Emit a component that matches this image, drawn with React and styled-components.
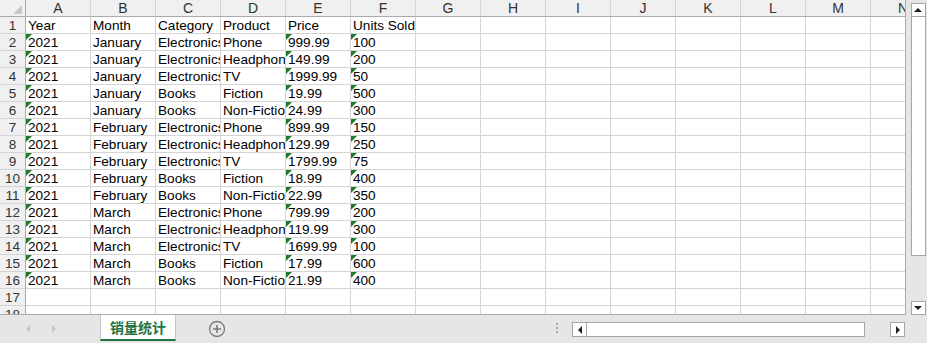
import React from 'react'
import styled, { createGlobalStyle } from 'styled-components'

const GlobalStyle = createGlobalStyle`
  html, body { margin: 0; padding: 0; background: #fff; }
  body { font-family: "Liberation Sans", Arial, sans-serif; }
`;

const columns = ['A', 'B', 'C', 'D', 'E', 'F', 'G', 'H', 'I', 'J', 'K', 'L', 'M', 'N']

const header = ['Year', 'Month', 'Category', 'Product', 'Price', 'Units Sold']

const sales = [
  ['2021', 'January', 'Electronics', 'Phone', '999.99', '100'],
  ['2021', 'January', 'Electronics', 'Headphones', '149.99', '200'],
  ['2021', 'January', 'Electronics', 'TV', '1999.99', '50'],
  ['2021', 'January', 'Books', 'Fiction', '19.99', '500'],
  ['2021', 'January', 'Books', 'Non-Fiction', '24.99', '300'],
  ['2021', 'February', 'Electronics', 'Phone', '899.99', '150'],
  ['2021', 'February', 'Electronics', 'Headphones', '129.99', '250'],
  ['2021', 'February', 'Electronics', 'TV', '1799.99', '75'],
  ['2021', 'February', 'Books', 'Fiction', '18.99', '400'],
  ['2021', 'February', 'Books', 'Non-Fiction', '22.99', '350'],
  ['2021', 'March', 'Electronics', 'Phone', '799.99', '200'],
  ['2021', 'March', 'Electronics', 'Headphones', '119.99', '300'],
  ['2021', 'March', 'Electronics', 'TV', '1699.99', '100'],
  ['2021', 'March', 'Books', 'Fiction', '17.99', '600'],
  ['2021', 'March', 'Books', 'Non-Fiction', '21.99', '400'],
]

// columns stored as text get the green marker
const textNumberCols = [0, 4, 5]

function App() {
  const rows = [header, ...sales, [], []]

  return (
    <>
      <GlobalStyle />
      <Workbook>
        <SheetArea>
          <Grid>
            <HeaderRow>
              <Corner />
              {columns.map((c) => (
                <ColHead key={c}>{c}</ColHead>
              ))}
            </HeaderRow>
            {rows.map((row, r) => (
              <Row key={r}>
                <RowHead>{r + 1}</RowHead>
                {columns.map((c, i) => (
                  <Cell key={c} $flag={r > 0 && row[i] !== undefined && textNumberCols.includes(i)}>
                    {row[i]}
                  </Cell>
                ))}
              </Row>
            ))}
          </Grid>
          <VScroll>
            <ScrollBtn><ArrowUp /></ScrollBtn>
            <VThumb />
            <VTrack />
            <ScrollBtn><ArrowDown /></ScrollBtn>
          </VScroll>
        </SheetArea>
        <TabBar>
          <NavArrows>
            <NavArrow $dir="left" />
            <NavArrow $dir="right" />
          </NavArrows>
          <SheetTab>销量统计</SheetTab>
          <AddSheet>
            <svg width="18" height="18" viewBox="0 0 18 18">
              <circle cx="9" cy="9" r="7.5" fill="none" stroke="#7a7a7a" strokeWidth="1.3" />
              <path d="M9 5v8M5 9h8" stroke="#7a7a7a" strokeWidth="1.6" />
            </svg>
          </AddSheet>
          <Spacer />
          <Grip>
            <span /><span /><span />
          </Grip>
          <HScroll>
            <ScrollBtn><ArrowLeft /></ScrollBtn>
            <HThumb />
            <HTrack />
            <ScrollBtn><ArrowRight /></ScrollBtn>
          </HScroll>
        </TabBar>
      </Workbook>
    </>
  )
}

const Workbook = styled.div`
  width: 927px;
  height: 343px;
  display: flex;
  flex-direction: column;
  overflow: hidden;
  background: #e6e6e6;
`;

const SheetArea = styled.div`
  height: 315px;
  display: flex;
  flex-shrink: 0;
`;

const Grid = styled.div`
  width: 906px;
  height: 315px;
  overflow: hidden;
  background: #fff;
  border-right: 1px solid #ababab;
  border-bottom: 1px solid #ababab;
  box-sizing: border-box;
`;

const HeaderRow = styled.div`
  display: flex;
  height: 17px;
  background: #f0f0f0;
  border-bottom: 1px solid #ababab;
  box-sizing: border-box;
`;

const Corner = styled.div`
  width: 26px;
  flex-shrink: 0;
  position: relative;
  border-right: 1px solid #ababab;
  box-sizing: border-box;
  &::after {
    content: '';
    position: absolute;
    right: 3px;
    bottom: 2px;
    border-left: 9px solid transparent;
    border-bottom: 9px solid #c6c6c6;
  }
`;

const ColHead = styled.div`
  width: 65px;
  flex-shrink: 0;
  border-right: 1px solid #d4d4d4;
  box-sizing: border-box;
  text-align: center;
  font-size: 14px;
  line-height: 17px;
  color: #333;
`;

const Row = styled.div`
  display: flex;
  height: 17px;
  flex-shrink: 0;
`;

const RowHead = styled.div`
  width: 26px;
  height: 17px;
  flex-shrink: 0;
  background: #f0f0f0;
  border-right: 1px solid #ababab;
  border-bottom: 1px solid #d4d4d4;
  box-sizing: border-box;
  text-align: center;
  font-size: 13.5px;
  line-height: 18px;
  color: #333;
`;

const Cell = styled.div`
  position: relative;
  width: 65px;
  height: 17px;
  flex-shrink: 0;
  border-right: 1px solid #d4d4d4;
  border-bottom: 1px solid #d4d4d4;
  box-sizing: border-box;
  padding-left: 2px;
  font-size: 13.6px;
  line-height: 18px;
  color: #000;
  white-space: nowrap;
  overflow: hidden;
  &::before {
    content: '';
    display: ${(p) => (p.$flag ? 'block' : 'none')};
    position: absolute;
    left: 0;
    top: 0;
    border-top: 6px solid #1f7a2e;
    border-right: 6px solid transparent;
  }
`;

const VScroll = styled.div`
  width: 21px;
  display: flex;
  flex-direction: column;
  align-items: center;
  padding: 3px 0 0 3px;
  box-sizing: border-box;
`;

const ScrollBtn = styled.div`
  width: 15px;
  height: 14px;
  flex-shrink: 0;
  background: #fff;
  border: 1px solid #a6a6a6;
  box-sizing: border-box;
  display: flex;
  align-items: center;
  justify-content: center;
`;

const ArrowUp = styled.span`
  border-left: 4px solid transparent;
  border-right: 4px solid transparent;
  border-bottom: 4px solid #222;
`;

const ArrowDown = styled.span`
  border-left: 4px solid transparent;
  border-right: 4px solid transparent;
  border-top: 4px solid #222;
`;

const ArrowLeft = styled.span`
  border-top: 4px solid transparent;
  border-bottom: 4px solid transparent;
  border-right: 4px solid #222;
`;

const ArrowRight = styled.span`
  border-top: 4px solid transparent;
  border-bottom: 4px solid transparent;
  border-left: 4px solid #222;
`;

const VThumb = styled.div`
  width: 15px;
  height: 240px;
  background: #fff;
  border: 1px solid #a6a6a6;
  border-top: none;
  box-sizing: border-box;
`;

const VTrack = styled.div`
  height: 45px;
  flex-shrink: 0;
`;

const TabBar = styled.div`
  flex: 1;
  display: flex;
  align-items: flex-start;
  background: #e6e6e6;
`;

const NavArrows = styled.div`
  width: 100px;
  display: flex;
  gap: 22px;
  padding: 10px 0 0 26px;
  box-sizing: border-box;
`;

const NavArrow = styled.span`
  width: 0;
  height: 0;
  border-top: 4px solid transparent;
  border-bottom: 4px solid transparent;
  ${(p) => (p.$dir === 'left' ? 'border-right: 4px solid #c8c8c8;' : 'border-left: 4px solid #c8c8c8;')}
`;

const SheetTab = styled.div`
  width: 76px;
  height: 26px;
  background: #fff;
  border-left: 1px solid #c6c6c6;
  border-right: 1px solid #c6c6c6;
  border-bottom: 2px solid #217346;
  box-sizing: border-box;
  text-align: center;
  font-family: "Noto Sans CJK SC", sans-serif;
  font-weight: 700;
  font-size: 14px;
  line-height: 24px;
  color: #217346;
`;

const AddSheet = styled.div`
  margin: 5px 0 0 32px;
  display: flex;
`;

const Spacer = styled.div`
  flex: 1;
`;

const Grip = styled.div`
  display: flex;
  flex-direction: column;
  gap: 2px;
  padding-top: 8px;
  margin-right: 14px;
  span {
    width: 2px;
    height: 2px;
    background: #a6a6a6;
  }
`;

const HScroll = styled.div`
  display: flex;
  align-items: center;
  margin: 7px 22px 0 0;
  ${ScrollBtn} { height: 15px; }
`;

const HThumb = styled.div`
  width: 278px;
  height: 15px;
  background: #fff;
  border: 1px solid #a6a6a6;
  border-left: none;
  box-sizing: border-box;
`;

const HTrack = styled.div`
  width: 25px;
`;

export default App
